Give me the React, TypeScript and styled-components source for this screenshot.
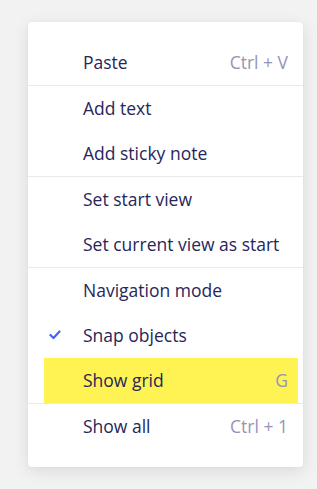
import React from 'react';
import styled, { createGlobalStyle } from 'styled-components';

const GlobalStyle = createGlobalStyle`
	html, body {
		margin: 0;
		padding: 0;
		background: #f2f2f2;
		font-family: 'Open Sans', 'Liberation Sans', sans-serif;
	}
`;

const Page = styled.div`
	padding: 22px 0 0 28px;
	min-height: 489px;
	box-sizing: border-box;
`;

const Menu = styled.div`
	width: 275px;
	box-sizing: border-box;
	padding: 18px 0;
	background: #ffffff;
	border-radius: 4px;
	box-shadow: 0 4px 16px rgba(0, 0, 0, 0.1), 0 0 2px rgba(0, 0, 0, 0.05);
	display: flex;
	flex-direction: column;
`;

const Separator = styled.div`
	height: 1px;
	background: #e8e8ee;
`;

const Row = styled.div<{ $highlight?: boolean }>`
	height: 45px;
	box-sizing: border-box;
	margin: 0 5px 0 16px;
	padding: 0 10px 2px 39px;
	display: flex;
	align-items: center;
	position: relative;
	background: ${({ $highlight }) => ($highlight ? '#fff353' : 'transparent')};
	font-size: 17.5px;
	color: #27265a;
`;

const Label = styled.span`
	flex: 1;
	white-space: nowrap;
`;

const Shortcut = styled.span`
	color: #9694b6;
	white-space: nowrap;
`;

const Check = styled.svg`
	position: absolute;
	left: 5px;
	top: 50%;
	margin-top: -6px;
`;

interface IItem {
	label: string;
	shortcut?: string;
	checked?: boolean;
	highlight?: boolean;
}

const groups: IItem[][] = [
	[{ label: 'Paste', shortcut: 'Ctrl + V' }],
	[{ label: 'Add text' }, { label: 'Add sticky note' }],
	[{ label: 'Set start view' }, { label: 'Set current view as start' }],
	[
		{ label: 'Navigation mode' },
		{ label: 'Snap objects', checked: true },
		{ label: 'Show grid', shortcut: 'G', highlight: true }
	],
	[{ label: 'Show all', shortcut: 'Ctrl + 1' }]
];

const MenuRow = ({ item }: { item: IItem }) => (
	<Row $highlight={item.highlight}>
		{item.checked && (
			<Check width="12" height="10" viewBox="0 0 12 10">
				<path d="M1.5 5l3 3L10.5 1.5" fill="none" stroke="#4262ff" strokeWidth="2.2" strokeLinecap="round" strokeLinejoin="round" />
			</Check>
		)}
		<Label>{item.label}</Label>
		{item.shortcut && <Shortcut>{item.shortcut}</Shortcut>}
	</Row>
);

const App = () => (
	<>
		<GlobalStyle />
		<Page>
			<Menu>
				{groups.map((group, i) => (
					<React.Fragment key={i}>
						{i > 0 && <Separator />}
						{group.map((item) => (
							<MenuRow key={item.label} item={item} />
						))}
					</React.Fragment>
				))}
			</Menu>
		</Page>
	</>
);

export default App;
